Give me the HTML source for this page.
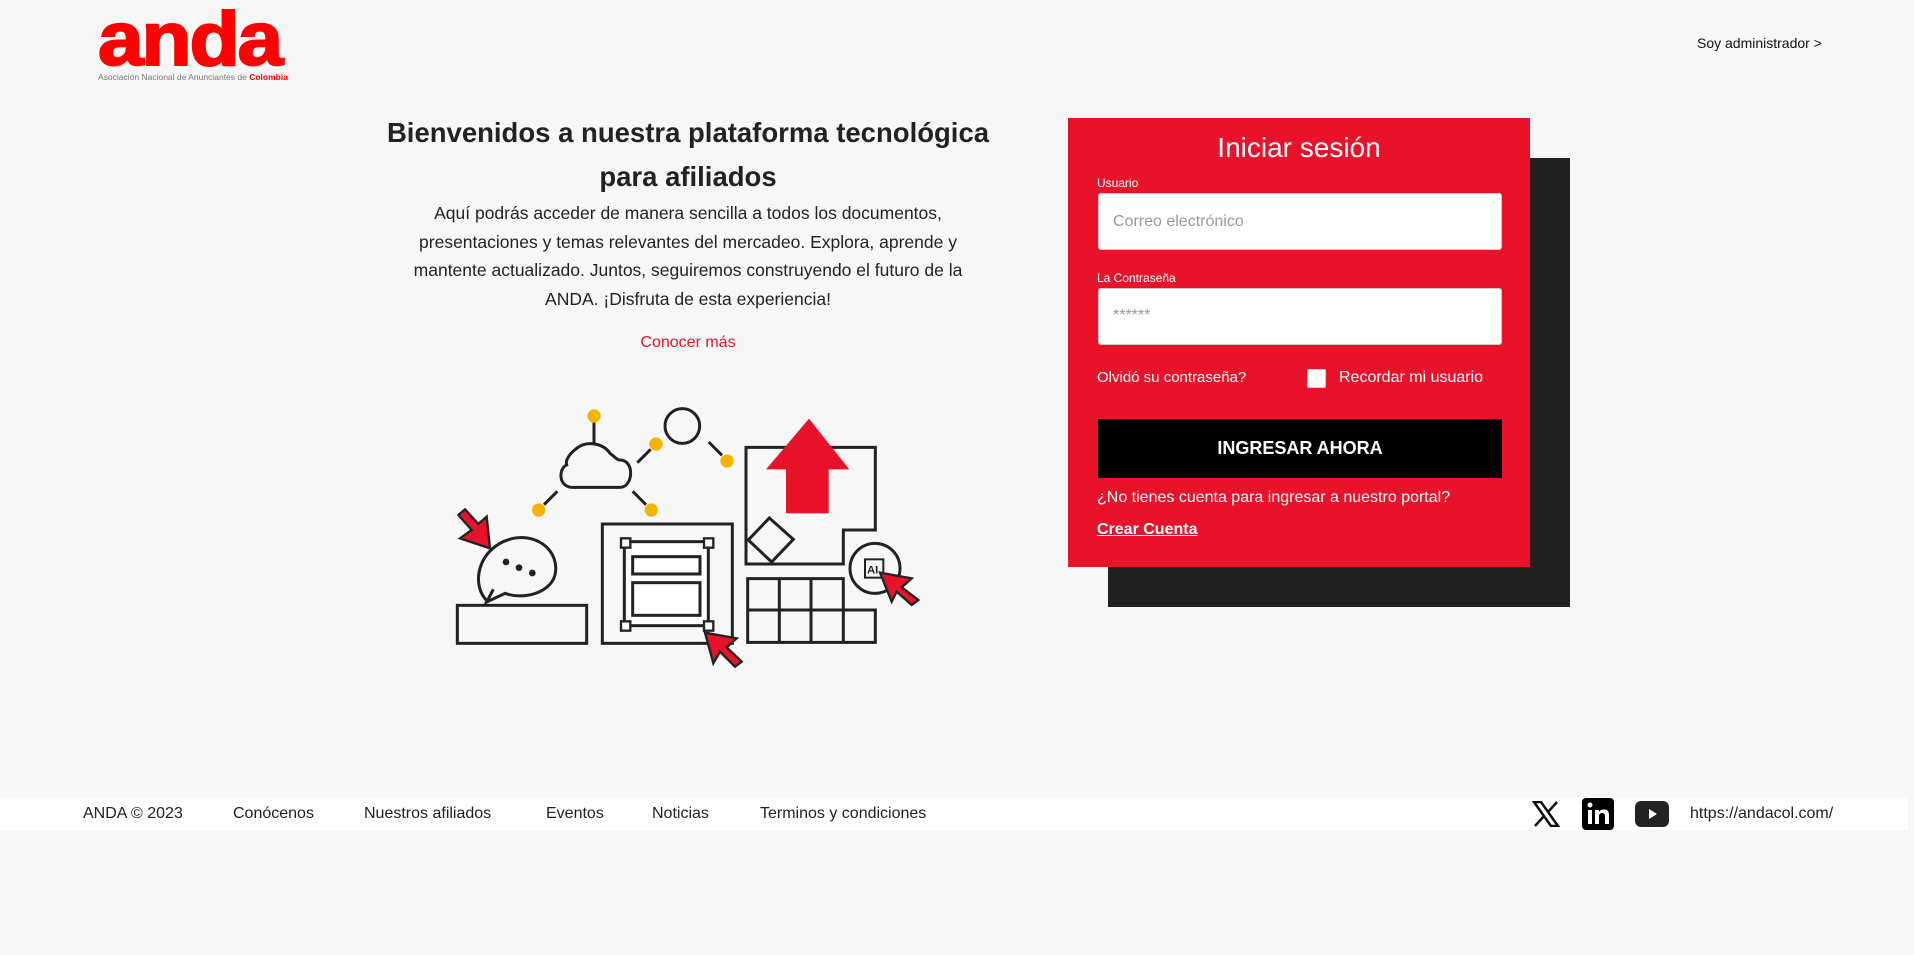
<!DOCTYPE html>
<html><head><meta charset="utf-8"><style>
*{margin:0;padding:0;box-sizing:border-box}
body{width:1914px;height:955px;background:#f7f7f7;font-family:"Liberation Sans",Arial,sans-serif;position:relative;overflow:hidden;color:#222}
.abs{position:absolute}
.logo{left:98px;top:2px;font-family:"Liberation Sans",Arial,sans-serif;font-weight:bold;font-size:76px;color:#f00;letter-spacing:-2px;line-height:76px;transform:scale(1.08,1);transform-origin:0 0;-webkit-text-stroke:2px #f00}
.logosub{left:98px;top:72px;font-size:8.5px;color:#777;white-space:nowrap}
.logosub b{color:#f00}
.admin{left:1697px;top:35px;font-size:14px;color:#111}
h1{position:absolute;left:360px;width:656px;top:111px;text-align:center;font-size:27.5px;line-height:44px;font-weight:bold;color:#222}
.p{left:350px;width:676px;top:199px;text-align:center;font-size:17.5px;line-height:28.5px;color:#222}
.more{left:370px;width:636px;top:334px;text-align:center;font-size:16px;color:#e8132b}
.shadow{left:1108px;top:158px;width:462px;height:449px;background:#212121}
.card{left:1068px;top:118px;width:462px;height:449px;background:#e8132b;color:#fff}
.in{position:absolute;left:30px;width:404px;height:57px;background:#fff;border:1px solid #ccc;border-radius:3px;color:#999;font-size:16px;padding:19px 14px}
.lbl{position:absolute;left:29px;font-size:12px}
.btn{position:absolute;left:30px;top:301px;width:404px;height:59px;background:#000;color:#fff;font-weight:bold;font-size:18px;text-align:center;line-height:59px}
.footer{left:0;top:797px;width:1908px;height:33px;background:#fff;font-size:16px;color:#222}
.footer span{position:absolute;top:8px;white-space:nowrap}
</style></head><body>
<div class="abs logo">anda</div>
<div class="abs logosub">Asociación Nacional de Anunciantes de <b>Colombia</b></div>
<div class="abs admin">Soy administrador &gt;</div>
<h1>Bienvenidos a nuestra plataforma tecnológica<br>para afiliados</h1>
<div class="abs p">Aquí podrás acceder de manera sencilla a todos los documentos,<br>presentaciones y temas relevantes del mercadeo. Explora, aprende y<br>mantente actualizado. Juntos, seguiremos construyendo el futuro de la<br>ANDA. ¡Disfruta de esta experiencia!</div>
<div class="abs more">Conocer más</div>
<svg class="abs" style="left:430px;top:390px" width="500" height="290" viewBox="0 0 1500 870" fill="none" stroke="#222" stroke-width="9">
<g fill="#f5b400" stroke="none"><circle cx="492" cy="78" r="20"/><circle cx="678" cy="162" r="20"/><circle cx="891" cy="213" r="20"/><circle cx="326" cy="360" r="20"/><circle cx="664" cy="360" r="20"/></g>
<path d="M492 98V158M622 218L662 178M836 156L876 196M382 304L342 344M608 304L648 344"/>
<circle cx="757" cy="108" r="52"/>
<path d="M425 292H570C610 292 615 210 570 210C560 210 555 200 540 190C520 160 470 150 440 175C420 190 405 210 410 225C385 235 385 290 425 292Z"/>
<rect x="82" y="646" width="388" height="114"/>
<path d="M175 636C120 590 140 470 250 445C330 430 390 490 375 555C360 610 280 630 225 610L170 636L190 598"/>
<g fill="#222" stroke="none"><circle cx="228" cy="516" r="10"/><circle cx="267" cy="533" r="10"/><circle cx="307" cy="549" r="10"/></g>
<path d="M180 475L90 445L125 420L85 375L105 358L145 402L170 380Z" fill="#e8132b" stroke-width="7"/>
<rect x="517" y="402" width="390" height="358"/>
<rect x="583" y="455" width="252" height="252" fill="#fff"/>
<rect x="608" y="500" width="202" height="52" fill="#fff"/>
<rect x="608" y="578" width="202" height="98" fill="#fff"/>
<g fill="#fff" stroke-width="7"><rect x="573" y="445" width="28" height="28"/><rect x="822" y="445" width="28" height="28"/><rect x="573" y="694" width="28" height="28"/><rect x="822" y="694" width="28" height="28"/></g>
<path d="M825 728L920 745L890 772L935 815L915 830L870 785L850 820Z" fill="#e8132b" stroke-width="7"/>
<path d="M948 172H1336V420H1240V522H948Z"/>
<path d="M1008 238L1137 86L1258 238H1196V370H1068V238Z" fill="#e8132b" stroke="none"/>
<path d="M1018 384L1090 448L1025 516L955 450Z"/>
<path d="M953 566H1240V660H1336V757H953ZM953 660H1240M1048 566V757M1143 566V757M1240 660V757"/>
<circle cx="1335" cy="535" r="75"/>
<rect x="1305" y="508" width="55" height="55" stroke-width="6"/>
<text x="1311" y="550" font-family="Liberation Sans" font-weight="bold" font-size="34" fill="#222" stroke="none">AI</text>
<path d="M1350 548L1445 565L1415 592L1465 630L1445 645L1400 605L1385 635Z" fill="#e8132b" stroke-width="7"/>
</svg>
<div class="abs shadow"></div>
<div class="abs card">
<div style="position:absolute;top:14px;width:100%;text-align:center;font-size:28px">Iniciar sesión</div>
<div class="lbl" style="top:58px">Usuario</div>
<div class="in" style="top:75px">Correo electrónico</div>
<div class="lbl" style="top:153px">La Contraseña</div>
<div class="in" style="top:170px;padding-top:18px">******</div>
<div style="position:absolute;left:29px;top:251px;font-size:15px">Olvidó su contraseña?</div>
<div style="position:absolute;left:239px;top:251px;width:19px;height:19px;background:#fff;border:1px solid #ccc;border-radius:2px"></div>
<div style="position:absolute;left:271px;top:251px;font-size:16px">Recordar mi usuario</div>
<div class="btn">INGRESAR AHORA</div>
<div style="position:absolute;left:29px;top:371px;font-size:16px">¿No tienes cuenta para ingresar a nuestro portal?</div>
<div style="position:absolute;left:29px;top:403px;font-size:16px;font-weight:bold;text-decoration:underline">Crear Cuenta</div>
</div>
<div class="abs footer">
<span style="left:83px">ANDA © 2023</span>
<span style="left:233px">Conócenos</span>
<span style="left:364px">Nuestros afiliados</span>
<span style="left:546px">Eventos</span>
<span style="left:652px">Noticias</span>
<span style="left:760px">Terminos y condiciones</span>
<svg style="position:absolute;left:1532px;top:4px" width="28" height="26" viewBox="0 0 28 26"><path d="M2 1H9L26 25H19ZM25 1L16 11M3 25L12 15" stroke="#111" stroke-width="2.5" fill="none"/></svg>
<svg style="position:absolute;left:1582px;top:1px" width="32" height="32" viewBox="0 0 32 32"><rect width="32" height="32" rx="4" fill="#000"/><rect x="6" y="12" width="4" height="14" fill="#fff"/><circle cx="8" cy="7" r="2.5" fill="#fff"/><path d="M13 12H17V14C18 12 20 11.5 22 11.5C25 11.5 27 13 27 17V26H23V18C23 16 22 15 20 15C18 15 17 16.5 17 18V26H13Z" fill="#fff"/></svg>
<svg style="position:absolute;left:1635px;top:4px" width="34" height="26" viewBox="0 0 34 26"><rect width="34" height="26" rx="6" fill="#222"/><path d="M14 8L22 13L14 18Z" fill="#fff"/></svg>
<span style="left:1690px">https://andacol.com/</span>
</div>
</body></html>
